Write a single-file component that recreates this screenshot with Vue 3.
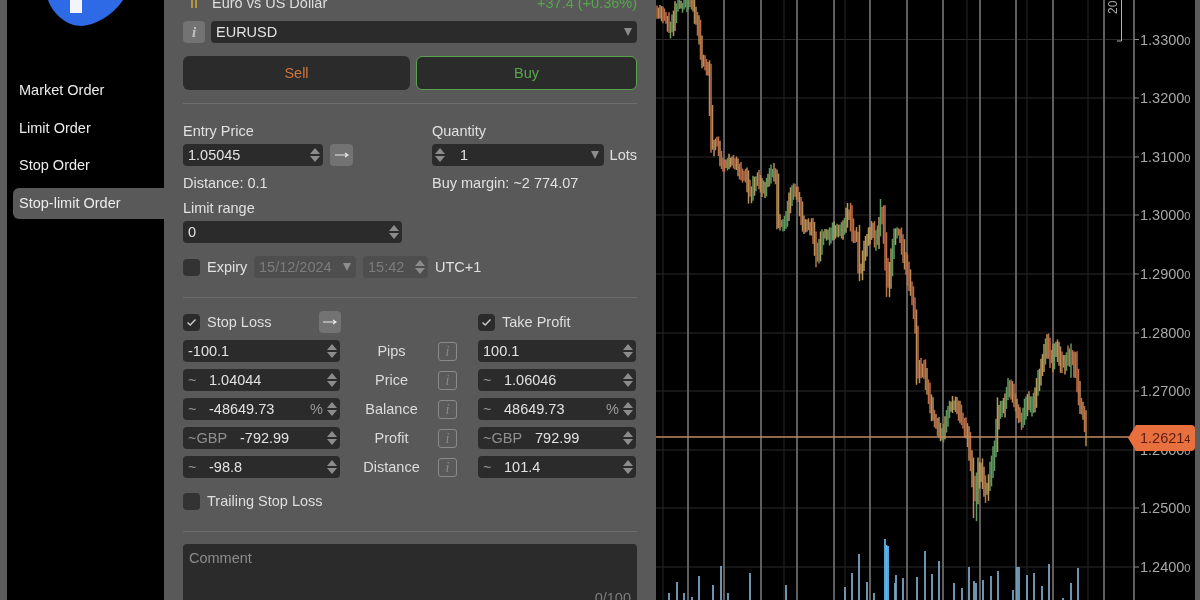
<script setup>
const sideItems = ['Market Order', 'Limit Order', 'Stop Order', 'Stop-limit Order']

const rows = [
  { label: 'Pips', l: { pre: '', val: '-100.1' }, r: { pre: '', val: '100.1' } },
  { label: 'Price', l: { pre: '~', val: '1.04044' }, r: { pre: '~', val: '1.06046' } },
  { label: 'Balance', l: { pre: '~', val: '-48649.73', pct: true }, r: { pre: '~', val: '48649.73', pct: true } },
  { label: 'Profit', l: { pre: '~GBP', val: '-792.99' }, r: { pre: '~GBP', val: '792.99' } },
  { label: 'Distance', l: { pre: '~', val: '-98.8' }, r: { pre: '~', val: '101.4' } },
]

const thick = [688, 724, 761, 797, 834, 870, 907, 943, 980, 1016, 1053, 1104, 1134]
const faint = [663, 784, 845, 967, 1027, 1088]
const levels = [
  [39.5, '1.3300'], [98, '1.3200'], [157, '1.3100'], [215, '1.3000'], [274, '1.2900'],
  [333, '1.2800'], [391, '1.2700'], [450, '1.2600'], [508, '1.2500'], [567, '1.2400'],
]

const pts = [
  [657,10],[664,14],[672,30],[677,7],[693,3],[700,33],[702,57],[710,70],[712,150],[718,140],[722,167],
  [735,160],[742,177],[747,173],[750,197],[757,177],[763,193],[772,170],[777,177],[778,220],[785,227],
  [793,187],[800,200],[803,227],[813,227],[818,263],[823,233],[832,237],[835,227],[842,233],[850,207],
  [853,237],[858,233],[860,283],[867,240],[873,227],[877,247],[883,200],[885,240],[888,293],[895,233],
  [900,233],[907,267],[913,297],[917,333],[918,377],[923,363],[933,413],[943,437],[950,407],[957,403],
  [963,423],[968,433],[973,473],[975,513],[980,460],[987,497],[992,467],[997,443],[998,403],[1003,413],
  [1010,383],[1018,410],[1023,423],[1028,397],[1033,413],[1037,387],[1043,363],[1048,337],[1052,370],
  [1055,343],[1063,367],[1070,350],[1072,373],[1075,350],[1080,403],[1085,417],[1087,440],
]

let seed = 17
const rnd = () => {
  seed = (seed * 16807) % 2147483647
  return seed / 2147483647
}
const yAt = (x) => {
  for (let i = 1; i < pts.length; i++) {
    if (x <= pts[i][0]) {
      const [x0, y0] = pts[i - 1]
      const [x1, y1] = pts[i]
      return y0 + ((y1 - y0) * (x - x0)) / (x1 - x0)
    }
  }
  return pts[pts.length - 1][1]
}
const candles = []
for (let x = 657; x <= 1087; x += 1.5) {
  const a = yAt(x - 1.5)
  const b = yAt(x + 1.5)
  const slope = yAt(x + 4) - yAt(x - 4)
  const r = rnd()
  const color = slope < -1
    ? (r < 0.6 ? '#5f9a60' : '#b99a5c')
    : slope > 1
      ? (r < 0.6 ? '#c06e48' : '#b98e58')
      : r < 0.5 ? '#7a9a5c' : '#bb8654'
  candles.push({
    x,
    y1: Math.min(a, b) - 2 - rnd() * 7,
    y2: Math.max(a, b) + 2 + rnd() * 7,
    color,
  })
}

const volumes = [
  [669,593],[677,582],[684,593],[692,597],[699,576],[713,585],[721,566],[728,593],[750,573],[786,585],
  [845,587],[852,573],[859,554],[867,582],[874,593],[885,539],[886.5,545],[888,546],[895,583],[896,575],[903,578],
  [917,577],[925,551],[932,574],[939,561],[954,583],[962,588],[969,567],[974,581],[976,583],[983,580],
  [991,576],[998,571],[1013,590],[1017,567],[1019,567],[1027,575],[1034,573],[1042,586],[1049,564],
  [1063,598],[1071,583],[1078,568],
]
</script>

<template>
  <div class="page">
    <div class="strip left"></div>

    <aside class="side">
      <svg class="logo" viewBox="0 0 157 30" width="157" height="30">
        <path d="M41 0C45 12 58 26 75 26C93 24 108 12 116 0Z" fill="#2f6ae6" />
        <rect x="63" y="0" width="12" height="13" fill="#f2f4fa" />
      </svg>
      <ul class="menu">
        <li v-for="(item, i) in sideItems" :key="item" :class="{ active: i === 3 }">{{ item }}</li>
      </ul>
    </aside>

    <main class="panel">
      <div class="head">
        <div class="head-name"><i class="pause"></i><span>Euro vs US Dollar</span></div>
        <span class="change">+37.4 (+0.36%)</span>
      </div>

      <div class="symbol">
        <button class="info-btn">i</button>
        <div class="field symbol-field"><span>EURUSD</span><i class="caret"></i></div>
      </div>

      <div class="sides">
        <button class="side-btn sell">Sell</button>
        <button class="side-btn buy">Buy</button>
      </div>

      <hr class="rule r1" />

      <div class="entry">
        <div class="entry-left">
          <div class="text-line">Entry Price</div>
          <div class="inline gap-top">
            <div class="field w140"><span>1.05045</span><i class="spin"></i></div>
            <button class="arrow-btn">
              <svg width="14" height="8" viewBox="0 0 14 8"><path d="M0 4H12M10 2l3 2-3 2" stroke="#e8e8e8" stroke-width="1.2" fill="none" /></svg>
            </button>
          </div>
          <div class="text-line gap-9">Distance: 0.1</div>
          <div class="text-line gap-9">Limit range</div>
          <div class="field w219 gap-top"><span>0</span><i class="spin"></i></div>
        </div>
        <div class="entry-right">
          <div class="text-line">Quantity</div>
          <div class="inline gap-top qty-row">
            <div class="field w172">
              <i class="spin qty-spin"></i><span class="qty-val">1</span><i class="caret"></i>
            </div>
            <span>Lots</span>
          </div>
          <div class="text-line gap-9">Buy margin: ~2 774.07</div>
        </div>
      </div>

      <div class="expiry">
        <i class="check"></i>
        <span class="expiry-label">Expiry</span>
        <div class="field off date"><span>15/12/2024</span><i class="caret"></i></div>
        <div class="field off time"><span>15:42</span><i class="spin"></i></div>
        <span>UTC+1</span>
      </div>

      <hr class="rule r2" />

      <div class="sl-head">
        <div class="sl-left">
          <i class="check on"><svg width="11" height="9" viewBox="0 0 11 9"><path d="M1.5 4.5L4.2 7 9.5 1.5" stroke="#d0d0d0" stroke-width="1.3" fill="none" /></svg></i>
          <span class="check-text">Stop Loss</span>
          <button class="arrow-btn push">
            <svg width="14" height="8" viewBox="0 0 14 8"><path d="M0 4H12M10 2l3 2-3 2" stroke="#e8e8e8" stroke-width="1.2" fill="none" /></svg>
          </button>
        </div>
        <div class="sl-right">
          <i class="check on"><svg width="11" height="9" viewBox="0 0 11 9"><path d="M1.5 4.5L4.2 7 9.5 1.5" stroke="#d0d0d0" stroke-width="1.3" fill="none" /></svg></i>
          <span class="check-text">Take Profit</span>
        </div>
      </div>

      <div class="grid">
        <div v-for="row in rows" :key="row.label" class="grid-row">
          <div class="field">
            <span v-if="row.l.pre" class="pre" :class="{ wide: row.l.pre.length > 1 }">{{ row.l.pre }}</span>
            <span>{{ row.l.val }}</span>
            <span v-if="row.l.pct" class="pct">%</span>
            <i class="spin" :class="{ tight: row.l.pct }"></i>
          </div>
          <div class="mid">
            <span class="mid-label">{{ row.label }}</span>
            <span class="mid-info">i</span>
          </div>
          <div class="field">
            <span v-if="row.r.pre" class="pre" :class="{ wide: row.r.pre.length > 1 }">{{ row.r.pre }}</span>
            <span>{{ row.r.val }}</span>
            <span v-if="row.r.pct" class="pct">%</span>
            <i class="spin" :class="{ tight: row.r.pct }"></i>
          </div>
        </div>
      </div>

      <div class="trailing">
        <i class="check"></i>
        <span class="check-text">Trailing Stop Loss</span>
      </div>

      <hr class="rule r3" />

      <div class="comment">
        <span class="comment-ph">Comment</span>
        <span class="counter">0/100</span>
      </div>
    </main>

    <section class="chart">
      <svg viewBox="656 0 539 600" width="539" height="600">
        <line v-for="l in levels" :key="l[0]" x1="656" x2="1134" :y1="l[0]" :y2="l[0]" class="h-grid" />
        <line v-for="x in faint" :key="x" :x1="x" :x2="x" y1="0" y2="600" class="v-faint" />
        <line v-for="x in thick" :key="x" :x1="x" :x2="x" y1="0" y2="600" class="v-thick" />

        <g class="soft">
          <rect v-for="v in volumes" :key="v[0]" :x="v[0] - 0.9" :y="v[1]" width="1.8" :height="600 - v[1]" :fill="v[0] > 884 && v[0] < 889 ? '#5fb4ee' : '#7ba4c2'" />
          <line v-for="c in candles" :key="c.x" :x1="c.x" :x2="c.x" :y1="c.y1" :y2="c.y2" :stroke="c.color" stroke-width="1.5" />
        </g>

        <g v-for="l in levels" :key="'t' + l[0]">
          <line x1="1134" x2="1139" :y1="l[0]" :y2="l[0]" class="tick" />
          <text x="1140" :y="l[0] + 5" class="axis">{{ l[1] }}<tspan class="axis-sm">0</tspan></text>
        </g>

        <path d="M1117 41H1121.5V0" class="bracket" />
        <text transform="translate(1117 14) rotate(-90)" class="bracket-text">20</text>

        <line x1="656" x2="1130" y1="437" y2="437" class="price-line" />
        <path d="M1136 425H1191Q1195 425 1195 429V447Q1195 451 1191 451H1136L1128 438Z" fill="#e8703f" />
        <text x="1140" y="443" class="price-text">1.2621<tspan class="price-sm">4</tspan></text>
      </svg>
    </section>

    <div class="strip right"></div>
  </div>
</template>

<style>
html, body { margin: 0; background: #000; }
</style>

<style scoped>
.page {
  width: 1200px;
  height: 600px;
  display: flex;
  overflow: hidden;
  background: #000;
  font-family: "Liberation Sans", Arial, sans-serif;
  font-size: 14.5px;
  color: #e0e0e0;
  filter: blur(0.35px);
}
.strip { background: #5c5c5c; flex: none; }
.strip.left { width: 7px; }
.strip.right { width: 5px; }

.side { width: 157px; flex: none; background: #000; }
.logo { display: block; }
.menu { list-style: none; margin: 45px 0 0; padding: 0 0 0 6px; }
.menu li {
  height: 31px;
  line-height: 31px;
  padding-left: 6px;
  margin-bottom: 6.67px;
  border-radius: 6px 0 0 6px;
  color: #ececec;
}
.menu li.active { background: #595959; }

.panel {
  width: 492px;
  flex: none;
  box-sizing: border-box;
  background: #595959;
  padding: 0 19px;
  margin-top: -6px;
  height: 606px;
  overflow: hidden;
}
.head { height: 18px; display: flex; justify-content: space-between; align-items: center; }
.head-name { display: flex; align-items: center; gap: 15px; padding-left: 8px; color: #dedede; }
.pause {
  width: 2px;
  height: 10px;
  border-left: 2px solid #b8953f;
  border-right: 2px solid #b8953f;
}
.change { color: #58a64e; }

button { font-family: inherit; border: 0; padding: 0; margin: 0; }
.symbol { display: flex; gap: 6px; margin-top: 9px; }
.info-btn {
  width: 22px;
  height: 22px;
  background: #737373;
  color: #c2c2c2;
  border-radius: 4px;
  font-family: "Liberation Serif", serif;
  font-style: italic;
  font-weight: 700;
  font-size: 15px;
}
.field {
  height: 22px;
  box-sizing: border-box;
  display: flex;
  align-items: center;
  background: #2b2b2b;
  border-radius: 4px;
  padding: 0 2px 0 5px;
  color: #e2e2e2;
  white-space: nowrap;
}
.symbol-field { flex: 1; }
.caret {
  margin-left: auto;
  margin-right: 3px;
  width: 0;
  height: 0;
  border-left: 4.5px solid transparent;
  border-right: 4.5px solid transparent;
  border-top: 8px solid #8c8c8c;
}
.spin {
  margin-left: auto;
  width: 11px;
  flex: none;
  display: flex;
  flex-direction: column;
  gap: 2px;
}
.spin.tight { margin-left: 4px; }
.spin::before, .spin::after {
  content: "";
  width: 0;
  height: 0;
  border-left: 5.5px solid transparent;
  border-right: 5.5px solid transparent;
}
.spin::before { border-bottom: 6px solid #8c8c8c; }
.spin::after { border-top: 6px solid #8c8c8c; }

.sides { display: flex; gap: 6px; margin-top: 13px; }
.side-btn {
  height: 34px;
  background: #2b2b2b;
  border-radius: 6px;
  font-size: 14.5px;
  box-sizing: border-box;
}
.sell { width: 227px; color: #d0763a; }
.buy { flex: 1; color: #58a84a; border: 1.5px solid #58a44c; }

.rule { border: 0; height: 1px; background: #6e6e6e; margin: 0; }
.r1 { margin-top: 13px; }
.r2 { margin-top: 19px; }
.r3 { margin-top: 21px; }

.entry { display: flex; margin-top: 19px; }
.entry-left { width: 249px; flex: none; }
.entry-right { flex: 1; }
.text-line { height: 16px; line-height: 16px; }
.gap-top { margin-top: 5px; }
.gap-9 { margin-top: 9px; }
.inline { display: flex; align-items: center; }
.w140 { width: 140px; }
.w219 { width: 219px; }
.w172 { width: 172px; padding-left: 3px; }
.qty-row { justify-content: space-between; }
.qty-spin { margin-left: 0; }
.qty-val { margin-left: 14px; }
.arrow-btn {
  width: 23px;
  height: 22px;
  background: #737373;
  border-radius: 4px;
  margin-left: 7px;
  display: flex;
  align-items: center;
  justify-content: center;
}

.expiry { display: flex; align-items: center; height: 22px; margin-top: 13px; }
.check {
  width: 17px;
  height: 17px;
  flex: none;
  background: #333;
  border-radius: 4px;
  display: flex;
  align-items: center;
  justify-content: center;
}
.check.on { background: #2b2b2b; }
.expiry-label { margin-left: 7px; width: 47px; }
.off { background: #4e4e4e; color: #7c7c7c; }
.date { width: 102px; }
.time { width: 65px; margin: 0 7px; }

.sl-head { display: flex; height: 22px; margin-top: 13px; }
.sl-left { width: 295px; flex: none; display: flex; align-items: center; padding-right: 137px; box-sizing: border-box; }
.sl-right { display: flex; align-items: center; }
.check-text { margin-left: 7px; color: #dedede; }
.push { margin-left: auto; flex: none; width: 22px; }

.grid { display: flex; flex-direction: column; gap: 7px; margin-top: 7px; }
.grid-row { display: grid; grid-template-columns: 157px 138px 158px; }
.pre { color: #8f8f8f; width: 21px; flex: none; }
.pre.wide { width: 52px; }
.pct { margin-left: auto; color: #9a9a9a; }
.mid { display: flex; align-items: center; }
.mid-label { width: 93px; padding-left: 5px; text-align: center; color: #dcdcdc; }
.mid-info {
  width: 17px;
  height: 17px;
  border: 1.5px solid #8a8a8a;
  border-radius: 3px;
  text-align: center;
  line-height: 17px;
  color: #8a8a8a;
  font-family: "Liberation Serif", serif;
  font-style: italic;
  font-size: 14px;
}

.trailing { display: flex; align-items: center; height: 18px; margin-top: 14px; }

.comment {
  margin-top: 12px;
  height: 90px;
  background: #2b2b2b;
  border-radius: 4px;
  position: relative;
  padding: 6px;
  box-sizing: border-box;
}
.comment-ph { color: #8c8c8c; }
.counter { position: absolute; top: 46px; right: 6px; color: #7c7c7c; }

.chart { width: 539px; flex: none; background: #000; }
.chart svg { display: block; }
.h-grid { stroke: #2b2b2b; stroke-width: 1; }
.v-faint { stroke: #262626; stroke-width: 1; }
.v-thick { stroke: #5e5e5e; stroke-width: 2; }
.soft { filter: blur(0.4px); }
.tick { stroke: #8c8c8c; stroke-width: 1; }
.axis { fill: #a8a8a8; font-size: 14.5px; }
.axis-sm { font-size: 11px; }
.bracket { stroke: #b4b4b4; stroke-width: 1; fill: none; }
.bracket-text { fill: #a8a8a8; font-size: 12px; }
.price-line { stroke: #c08a60; stroke-width: 1.5; }
.price-text { fill: #5a1c0c; font-size: 14.5px; }
.price-sm { font-size: 11px; }
</style>
